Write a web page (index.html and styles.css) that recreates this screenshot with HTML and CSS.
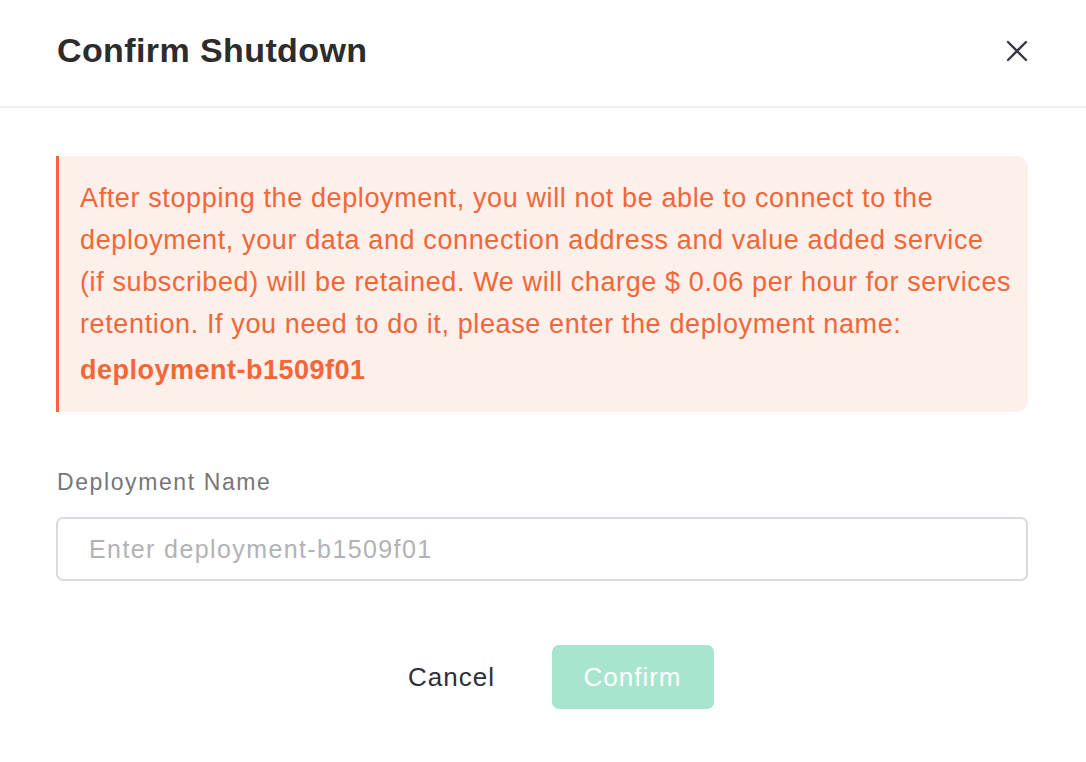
FILE: index.html
```html
<!DOCTYPE html>
<html>
<head>
<meta charset="utf-8">
<link rel="stylesheet" href="styles.css">
</head>
<body>
<div class="modal">
  <div class="modal-header">
    <h1 class="modal-title">Confirm Shutdown</h1>
    <button class="close-btn" aria-label="Close">
      <svg width="22" height="22" viewBox="0 0 22 22"><path d="M2 2 L20 20 M20 2 L2 20" stroke="#363641" stroke-width="2.3" stroke-linecap="round" fill="none"/></svg>
    </button>
  </div>
  <div class="modal-body">
    <div class="alert">
      <p class="alert-text">After stopping the deployment, you will not be able to connect to the deployment, your data and connection address and value added service (if&nbsp;subscribed) will be retained. We will charge $ 0.06 per hour for services retention. If you need to do it, please enter the deployment name:</p>
      <p class="alert-name">deployment-b1509f01</p>
    </div>
    <label class="field-label" for="dn">Deployment Name</label>
    <input class="field-input" id="dn" type="text" placeholder="Enter deployment-b1509f01">
    <div class="actions">
      <button class="btn btn-cancel">Cancel</button>
      <button class="btn btn-confirm">Confirm</button>
    </div>
  </div>
</div>
</body>
</html>
```
FILE: styles.css
```css
html, body {
  margin: 0;
  padding: 0;
  background: #ffffff;
}
body {
  font-family: "Liberation Sans", Arial, sans-serif;
}
.modal {
  width: 1086px;
  height: 762px;
  background: #fff;
}
.modal-header {
  height: 108px;
  border-bottom: 2px solid #eceef4;
  display: flex;
  align-items: center;
  justify-content: space-between;
  padding: 0 58px 0 57px;
  box-sizing: border-box;
}
.modal-title {
  margin: 0;
  font-size: 34px;
  font-weight: bold;
  color: #2c2c2c;
  letter-spacing: 0.4px;
  position: relative;
  top: -3px;
}
.close-btn {
  border: 0;
  background: none;
  padding: 0;
  width: 22px;
  height: 22px;
  display: flex;
  position: relative;
  top: -2px;
}
.modal-body {
  padding: 48px 58px 0 56px;
}
.alert {
  background: #fdefea;
  border-left: 3px solid #f26637;
  border-radius: 0 12px 12px 0;
  padding: 21px 8px 21px 21px;
  color: #f26637;
}
.alert-text {
  margin: 0;
  font-size: 27px;
  letter-spacing: 0.62px;
  line-height: 42px;
}
.alert-name {
  margin: 4px 0 0 0;
  font-size: 27px;
  letter-spacing: 0.5px;
  line-height: 42px;
  font-weight: bold;
}
.field-label {
  display: block;
  margin-top: 55px;
  font-size: 23px;
  letter-spacing: 1.6px;
  line-height: 30px;
  color: #76767a;
  padding-left: 1px;
}
.field-input {
  display: block;
  box-sizing: border-box;
  width: 100%;
  height: 64px;
  margin-top: 20px;
  border: 2px solid #d9dbe1;
  border-radius: 7px;
  padding: 0 31px;
  font-family: "Liberation Sans", Arial, sans-serif;
  font-size: 25px;
  letter-spacing: 1.4px;
  color: #333;
  outline: none;
}
.field-input::placeholder {
  color: #b2b2b6;
}
.actions {
  display: flex;
  justify-content: center;
  gap: 19px;
  margin-top: 64px;
}
.btn {
  width: 162px;
  height: 64px;
  border: 0;
  border-radius: 7px;
  font-family: "Liberation Sans", Arial, sans-serif;
  font-size: 26px;
  letter-spacing: 1px;
  cursor: pointer;
}
.btn-cancel {
  background: transparent;
  color: #2e2f3a;
}
.btn-confirm {
  background: #a7e5cf;
  color: #ffffff;
}
```
